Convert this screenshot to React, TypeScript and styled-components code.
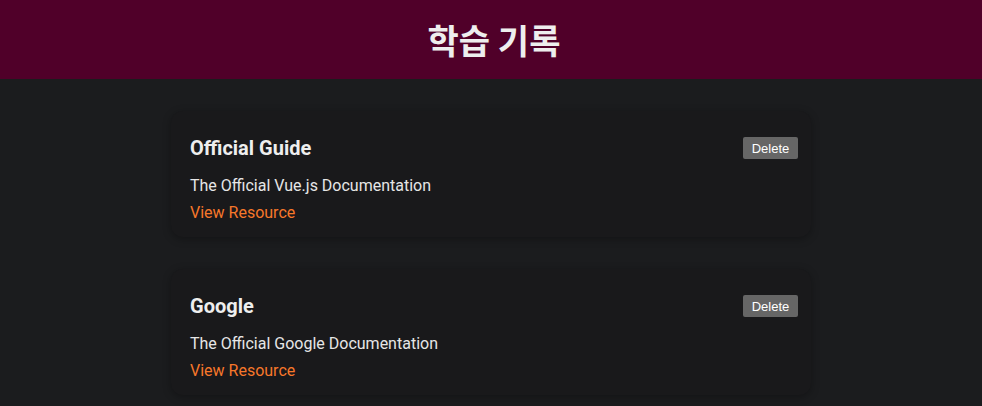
import React from 'react';
import styled, { createGlobalStyle } from 'styled-components';

const GlobalStyle = createGlobalStyle`
  * { box-sizing: border-box; }
  html, body { margin: 0; padding: 0; }
  body {
    background: #1b1c1e;
    font-family: Roboto, "Noto Sans CJK KR", sans-serif;
    color: #e8e8e8;
  }
`;

const Header = styled.header`
  width: 100%;
  height: 79px;
  padding-left: 6px;
  background: #500029;
  display: flex;
  align-items: center;
  justify-content: center;
`;

const Title = styled.h1`
  margin: 0;
  font-family: "Noto Sans CJK KR", sans-serif;
  font-size: 34px;
  font-weight: 700;
  color: #eeeeee;
`;

const List = styled.ul`
  list-style: none;
  margin: 32px auto;
  padding: 0;
  width: 640px;
  display: flex;
  flex-direction: column;
  gap: 32px;
`;

const Card = styled.li`
  background: #19191b;
  border-radius: 12px;
  box-shadow: 0 2px 8px rgba(0, 0, 0, 0.3);
  padding: 17px 13px 16px 19px;
  height: 126px;
`;

const CardHeader = styled.div`
  display: flex;
  justify-content: space-between;
  align-items: center;
  margin-top: 8px;
`;

const CardTitle = styled.h3`
  margin: 0;
  font-size: 20px;
  font-weight: 700;
  color: #eeeeee;
`;

const DeleteButton = styled.button`
  font-family: "Liberation Sans", Arial, sans-serif;
  font-size: 13px;
  color: #ffffff;
  background: #666666;
  border: none;
  border-radius: 2px;
  padding: 0 8px;
  height: 22px;
  width: 55px;
  cursor: pointer;
`;

const Description = styled.p`
  margin: 16px 0 0;
  font-size: 16px;
  color: #e6e6e6;
`;

const Link = styled.a`
  display: block;
  margin-top: 8px;
  font-size: 16px;
  color: #f7772a;
  text-decoration: none;
`;

const resources = [
  { id: 'official-guide', title: 'Official Guide', description: 'The Official Vue.js Documentation' },
  { id: 'google', title: 'Google', description: 'The Official Google Documentation' },
];

export default function App() {
  return (
    <>
      <GlobalStyle />
      <Header>
        <Title>학습 기록</Title>
      </Header>
      <List>
        {resources.map((r) => (
          <Card key={r.id}>
            <CardHeader>
              <CardTitle>{r.title}</CardTitle>
              <DeleteButton>Delete</DeleteButton>
            </CardHeader>
            <Description>{r.description}</Description>
            <Link href="#">View Resource</Link>
          </Card>
        ))}
      </List>
    </>
  );
}
